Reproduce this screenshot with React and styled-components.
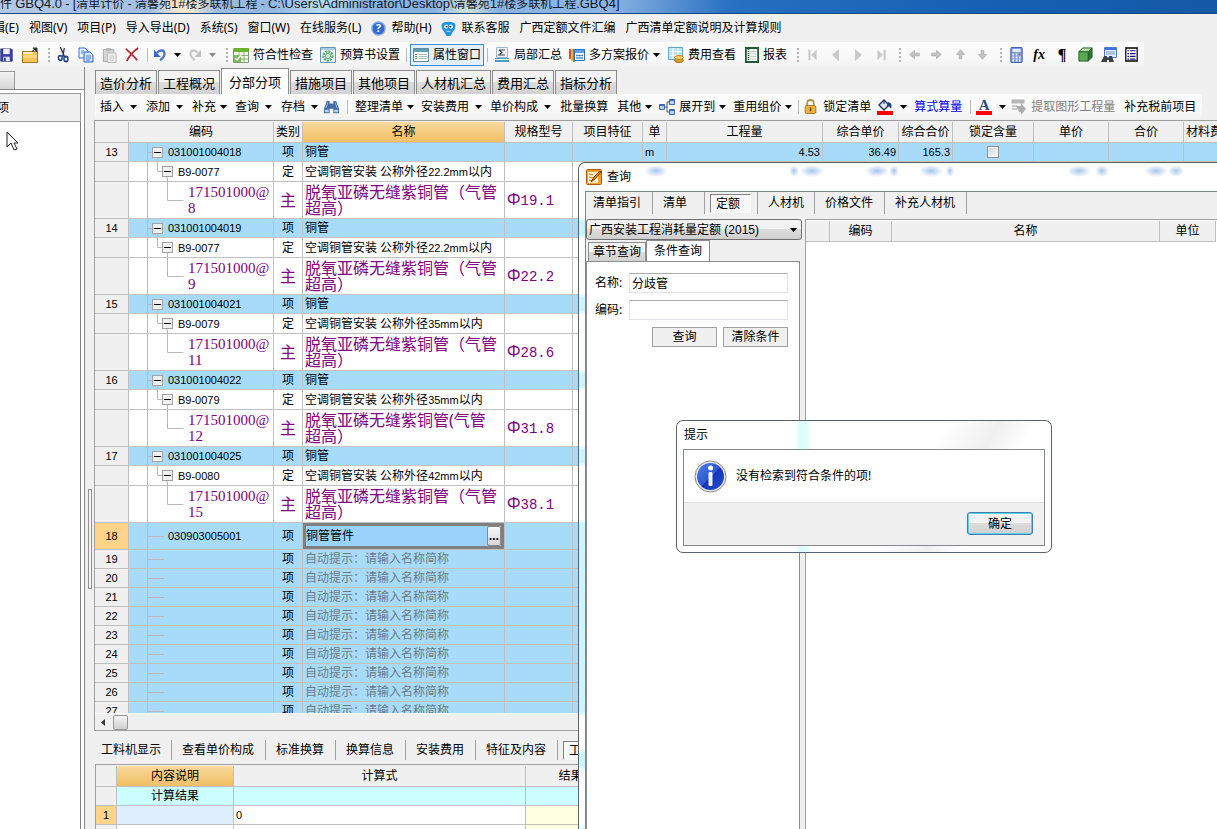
import React, { useState } from "react";
import styled, { createGlobalStyle, css } from "styled-components";

const GlobalStyle = createGlobalStyle`
  * {
    box-sizing: border-box;
  }

  body {
    margin: 0;
    background: #f0f0f0;
    color: #000;
    font: 12px/16px "Noto Sans", "Noto Sans CJK SC", sans-serif;
  }

  button,
  input,
  select {
    font: inherit;
    color: inherit;
    margin: 0;
    padding: 0;
    border: 0;
    background: none;
  }

  svg {
    display: block;
    flex: none;
  }
`;

/* Icons */

const Icon = ({ name, w = 16, h = 16 }) => (
  <svg width={w} height={h} viewBox="0 0 16 16" preserveAspectRatio="none">
    {icons[name]}
  </svg>
);

const icons = {
  save: (
    <>
      <path d="M1 1h13l1 1v13H1z" fill="#3a3fae" stroke="#25287c" />
      <path d="M4 1h8v6H4z" fill="#eef1fb" />
      <path d="M4 10h8v5H4z" fill="#dfe3f5" />
      <path d="M5 11h2v4H5z" fill="#25287c" />
    </>
  ),
  folder: (
    <>
      <path d="M.5 4.500h15v11H.5z" fill="#f0c65a" stroke="#a97a1c" />
      <path d="M1 5h10v2H1z" fill="#fdf0bd" />
      <path d="M1 8h14v3H1z" fill="#f8d87e" />
      <path d="M10 5c1-2 2-3 4-3M11 1h4v4z" stroke="#333" fill="#333" />
    </>
  ),
  cut: (
    <>
      <path d="M4 0l5 9M9 1L7 10" stroke="#30384a" strokeWidth="1.600" />
      <circle cx="4" cy="11" r="2.300" fill="none" stroke="#1f4190" strokeWidth="1.800" />
      <circle cx="11" cy="12" r="2.500" fill="none" stroke="#1f4190" strokeWidth="1.800" />
    </>
  ),
  copy: (
    <>
      <path d="M1 1h6l3 3v7H1z" fill="#e8f1ff" stroke="#3b76cf" />
      <path d="M6 5h6l3 3v7H6z" fill="#cfe2fc" stroke="#2b63ba" />
      <path d="M3 4h3M3 6h2M8 9h5M8 11h5M8 13h4" stroke="#4d86d8" />
    </>
  ),
  paste: (
    <>
      <path d="M1.500 2.500h11v12h-11z" fill="#d5d5d5" stroke="#aaa" />
      <path d="M4.500 1h5v3h-5z" fill="#b5b5b5" />
      <path d="M6 6h9v9.500H6z" fill="#efefef" stroke="#b8b8b8" />
      <path d="M8 9h5M8 11h5M8 13h5" stroke="#c5c5c5" />
    </>
  ),
  remove: <path d="M1 2c5 4 9 8 13 12M15 1C9 5 5 9 2 15" stroke="#cb1e2c" strokeWidth="2" fill="none" />,
  undo: (
    <>
      <path d="M4 6c3-4 10-4 10 1 0 4-3 6-6 8" fill="none" stroke="#4a78c8" strokeWidth="3" />
      <path d="M0 2v9h9z" fill="#3569c4" />
    </>
  ),
  redo: (
    <>
      <path d="M12 6C9 2 2 2 2 7c0 4 3 6 6 8" fill="none" stroke="#cacaca" strokeWidth="3" />
      <path d="M16 2v9H7z" fill="#c3c3c3" />
    </>
  ),
  check: (
    <>
      <path d="M.5 1.500h15v14H.5z" fill="#f5fbf0" stroke="#7f9a72" />
      <path d="M1 1h15v4H1z" fill="#6cb32c" />
      <path d="M1 8.500h14M1 12h14M6 5v10M11 5v10" stroke="#8cae7b" />
      <path d="M1 8h7v7H1z" fill="#7db958" />
      <path d="M2 11l2 2 4-5" fill="none" stroke="#fff" strokeWidth="1.300" />
    </>
  ),
  gear: (
    <>
      <path d="M.5.500h15v15H.5z" fill="#e7f3f6" stroke="#6f93ad" />
      <path d="M1 1h14v2H1z" fill="#a9cce6" />
      <circle cx="8" cy="9" r="4.500" fill="none" stroke="#63ad76" strokeWidth="2.400" strokeDasharray="2 1" />
      <circle cx="8" cy="9" r="2.600" fill="#d7eddb" stroke="#63ad76" />
    </>
  ),
  panel: (
    <>
      <path d="M.5 1.500h15v13H.5z" fill="#fff" stroke="#63879b" />
      <path d="M1 2h14v3H1z" fill="#5d9fb4" />
      <path d="M3 7v6" stroke="#5aa052" strokeWidth="2" strokeDasharray="1 1" />
      <path d="M6 7.500h8M6 9.500h8M6 11.500h8" stroke="#a7bcc2" />
    </>
  ),
  sigma: (
    <>
      <path d="M2.500.500h11v10h-11z" fill="#edf4fb" stroke="#9eb6cd" />
      <path d="M5 3h6M5 3l3 2.500L5 8h6" fill="none" stroke="#444" strokeWidth="1.200" />
      <path d="M1 11h14v1H1zM1 13h14v2H1z" fill="#4b9fbb" />
    </>
  ),
  plans: (
    <>
      <path d="M0 2h2v10H0z" fill="#e34a2d" />
      <path d="M2 2h2v12H2z" fill="#f2b52c" />
      <path d="M4 2h2v13H4z" fill="#46a648" />
      <path d="M5.500 2.500h10v11h-10z" fill="#fff" stroke="#2c71c6" />
      <path d="M6 3h9v3H6z" fill="#5ba1ec" />
      <path d="M7 8.500h7M7 11h7" stroke="#558ec9" strokeWidth="1.500" />
    </>
  ),
  fees: (
    <>
      <path d="M.5.500h14v12H.5z" fill="#bde2f6" stroke="#5da6cc" />
      <path d="M1 4.500h13M1 8.500h13M5 1v11M10 1v11" stroke="#fff" />
      <ellipse cx="11" cy="13.500" rx="4.500" ry="2" fill="#dba233" stroke="#a86f11" />
      <ellipse cx="11" cy="10.500" rx="4.500" ry="2" fill="#f7cc62" stroke="#b7821f" />
    </>
  ),
  report: (
    <>
      <path d="M1 1h14v14H1z" fill="#fff" stroke="#1b5a30" strokeWidth="2" />
      <path d="M4 2v12" stroke="#1b5a30" strokeDasharray="1 1" strokeWidth="2" />
      <path d="M6 4.500h7M6 7h7M6 9.500h7M6 12h7" stroke="#b9c8bd" />
    </>
  ),
  first: <path d="M2 2h3v12H2zM14 2v12L6 8z" fill="#c9c9c9" />,
  prev: <path d="M13 1v14L3 8z" fill="#c9c9c9" />,
  next: <path d="M3 1v14l10-7z" fill="#c9c9c9" />,
  last: <path d="M14 2h-3v12h3zM2 2v12l8-6z" fill="#c9c9c9" />,
  left: <path d="M1 8l7-6v4h7v4H8v4z" fill="#c2c2c2" stroke="#aaa" />,
  right: <path d="M15 8L8 2v4H1v4h7v4z" fill="#c2c2c2" stroke="#aaa" />,
  up: <path d="M8 1l6 7h-4v6H6V8H2z" fill="#c2c2c2" stroke="#aaa" />,
  down: <path d="M8 15l6-7h-4V2H6v6H2z" fill="#c2c2c2" stroke="#aaa" />,
  calc: (
    <>
      <rect x="1" y=".5" width="14" height="15" rx="1" fill="#7a9bdd" stroke="#3b58a0" />
      <path d="M3 2h10v3H3z" fill="#dfeaff" />
      <path d="M3 7.500h10M3 10.500h10M3 13.500h10" stroke="#fff" strokeWidth="2" strokeDasharray="2 2" />
      <path d="M11 7.500h2" stroke="#d33" strokeWidth="2" />
    </>
  ),
  cube: (
    <>
      <path d="M1 5h10v10H1z" fill="#5aa953" stroke="#245b24" />
      <path d="M1 5l4-4h10l-4 4z" fill="#b8e0ad" stroke="#245b24" />
      <path d="M15 1v10l-4 4V5z" fill="#2f7a33" stroke="#245b24" />
    </>
  ),
  find: (
    <>
      <path d="M3.500.500h12v10h-12z" fill="#e4efff" stroke="#4c7ad1" />
      <path d="M4 1h11v2H4z" fill="#3d74dd" />
      <path d="M5 5h9M5 7h9" stroke="#7b9bd0" />
      <path d="M3 9h3v2h2V9h3l2 6H8v-2H6v2H0z" fill="#3a4148" />
    </>
  ),
  list: (
    <>
      <path d="M1 1h14v14H1z" fill="#fff" stroke="#000" strokeWidth="1.500" />
      <path d="M3 4h2M3 7h2M3 10h2M3 13h2M6 4h7M6 7h7M6 10h7M6 13h7" stroke="#14147a" strokeWidth="1.300" />
    </>
  ),
  binoculars: (
    <>
      <path d="M3 1h3v3h4V1h3l3 9v5h-6v-5H6v5H0v-5z" fill="#456ca8" />
      <path d="M1 11h4v3H1zM11 11h4v3h-4z" fill="#b9d3f3" />
      <path d="M4 3L2 9M12 3l2 6" stroke="#a8c3ea" />
    </>
  ),
  tree: (
    <>
      <path d="M5 8h3V3h3M8 8v5h3" fill="none" stroke="#555" />
      <path d="M.5 5.500h5v5h-5zM10.500.500h5v5h-5zM10.500 10.500h5v5h-5z" fill="#b9d0f2" stroke="#3a68b3" />
      <path d="M1 6h4v1H1zM11 1h4v1h-4zM11 11h4v1h-4z" fill="#3a68b3" />
    </>
  ),
  lock: (
    <>
      <path d="M4 8V4c0-4 8-4 8 0v4" fill="none" stroke="#a9924f" strokeWidth="2" />
      <rect x="1.500" y="7" width="13" height="8.500" rx="1.500" fill="#ecb43e" stroke="#9b7016" />
      <path d="M7 9h2v4H7z" fill="#6b4a0c" />
    </>
  ),
  bucket: (
    <>
      <path d="M2 6l5-5 5 5-5 5z" fill="#dfe5ee" stroke="#1d2b57" strokeWidth="1.300" />
      <path d="M7 1V5" stroke="#1d2b57" />
      <path d="M11 3c4 1 4 4 3 7-1-2-2-3-4-3z" fill="#1d3d86" />
      <path d="M0 12h16v4H0z" fill="#f00" />
    </>
  ),
  extract: (
    <>
      <path d="M.5.500h13v4H.5z" fill="#b5b5b5" />
      <path d="M1 6h5v2H1zM1 9h5v2H1z" fill="#c9c9c9" />
      <path d="M5 7h5V4l5 6-5 6v-3H8z" fill="#adadad" />
    </>
  ),
  help: (
    <>
      <circle cx="8" cy="8" r="7" fill="#2d6ed0" stroke="#8aa9da" strokeWidth="1.500" />
      <text x="8" y="12" fontSize="11" fontWeight="700" fill="#fff" textAnchor="middle">?</text>
    </>
  ),
  mascot: (
    <>
      <path d="M1 3c2-3 12-3 14 0 1 3 0 6-2 8l-3 5H6l-3-5C1 9 0 6 1 3z" fill="#1e92dc" />
      <circle cx="5.500" cy="6" r="2.200" fill="#fff" />
      <circle cx="10.500" cy="6" r="2.200" fill="#fff" />
      <circle cx="6" cy="6" r="1" fill="#123" />
      <circle cx="10" cy="6" r="1" fill="#123" />
      <path d="M6 10.500c1 1 3 1 4 0" fill="none" stroke="#fff" />
    </>
  ),
  query: (
    <>
      <rect x=".5" y=".5" width="15" height="15" rx="1" fill="#f0a22c" stroke="#b3570a" />
      <path d="M2 3h10v11H2z" fill="#fff3cf" />
      <path d="M3 5l4 1M3 8l4 1M3 11l3 1" stroke="#c7771c" />
      <path d="M5 13l3-5 6-6 1 1-6 7z" fill="#e78a15" stroke="#7c3a08" />
    </>
  ),
};

const Caret = () => (
  <svg width="7" height="4" viewBox="0 0 7 4">
    <path d="M0 0h7L3.500 4z" fill="currentColor" />
  </svg>
);

/* Shared pieces */

const Latin = styled.span`
  font-family: "Liberation Sans", sans-serif;
  font-size: ${(p) => p.$size || 11}px;
`;

// latin characters get their own size between the full width ones
const Mixed = ({ size, children }) =>
  children
    .split(/([\x21-\x7e]+)/)
    .map((part, i) => (i % 2 ? <Latin key={i} $size={size}>{part}</Latin> : part));

const Page = styled.div`
  position: relative;
  display: flex;
  flex-direction: column;
  height: 100vh;
  overflow: hidden;
`;

const TitleBar = styled.header`
  flex: none;
  height: 14px;
  overflow: hidden;
  white-space: nowrap;
  line-height: 7px;
  color: #101828;
  border-bottom: 1px solid #17467f;
  background: radial-gradient(circle at 184px 6px, #f3e6cf 8px, transparent 34px),
    radial-gradient(circle at 320px 4px, #b6d8f1 8px, transparent 44px),
    radial-gradient(circle at 466px 12px, #c5ded6 4px, transparent 32px),
    linear-gradient(90deg, #b3c8e6, #8ab2e0 30%, #8cb4e4 50%, #2870c0 60%, #1661b4 80%, #1459a6);
`;

const MenuBar = styled.nav`
  display: flex;
  align-items: center;
  gap: 10px;
  flex: none;
  height: 28px;
  overflow: hidden;
`;

const MenuItem = styled.button`
  display: flex;
  align-items: center;
  gap: 5px;
  flex: none;
  white-space: nowrap;

  &:first-child {
    margin-left: -7px;
  }
`;

const ToolRow = styled.div`
  display: flex;
  flex: none;
  height: ${(p) => p.$height}px;
  padding-left: ${(p) => p.$pad || 0}px;
`;

const ToolGroup = styled.div`
  display: flex;
  align-items: center;
  flex: none;
  padding-right: ${(p) => p.$end || 0}px;
  background: linear-gradient(#fcfcfc, #f9f9f9 60%, #f1f1f1);
`;

const Tool = styled.button`
  display: flex;
  align-items: center;
  flex: none;
  gap: ${(p) => p.$inner || 4}px;
  margin-left: ${(p) => p.$gap || 0}px;
  height: 22px;
  white-space: nowrap;
  color: ${(p) => p.$color || "#000"};
  ${(p) =>
    p.$pressed &&
    css`
      padding: 0 2px;
      border: 1px solid #3d8ad6;
      background: #e2f0fb;
    `}
`;

const Separator = styled.span`
  flex: none;
  width: 1px;
  height: 14px;
  margin-left: ${(p) => p.$gap}px;
  background: #bbb;
`;

const Handle = styled.span`
  flex: none;
  width: 2px;
  height: 14px;
  margin-left: ${(p) => p.$gap}px;
  background: repeating-linear-gradient(#b4b4b4 0 2px, transparent 2px 4px);
`;

const Glyph = styled.span`
  width: 12px;
  font: ${(p) => p.$font};
  text-align: center;
`;

const FontColor = styled.span`
  width: 16px;
  border-bottom: 4px solid #f00;
  font: bold 15px/12px "Liberation Serif", serif;
  color: #2d4d86;
  text-align: center;
`;

/* Left side */

const Body = styled.div`
  display: flex;
  flex: 1;
  min-height: 0;
`;

const Side = styled.aside`
  position: relative;
  display: flex;
  flex-direction: column;
  flex: none;
  width: 85px;
  padding-top: 4px;
  border-right: 1px solid #8a8a8a;
`;

const SideTab = styled.div`
  width: 15px;
  height: 18px;
  border: 1px solid #9a9a9a;
  border-width: 1px 1px 0 0;
  background: linear-gradient(#f2f2f2, #d5d5d5);
`;

const SideFrame = styled.div`
  flex: 1;
  display: flex;
  flex-direction: column;
  padding: 3px 3px 0 0;
  border-top: 1px solid #8a8a8a;
  background: #fff;
`;

const SideHead = styled.div`
  height: 29px;
  padding-top: 6px;
  border: 1px solid #9a9a9a;
  border-width: 1px 1px 1px 0;
  background: #f0f0f0;
  text-indent: -3px;
`;

const SideTree = styled.div`
  flex: 1;
  border-right: 1px solid #808080;
`;

const Pointer = styled.svg`
  position: absolute;
  left: 6px;
  top: 64px;
`;

const Splitter = styled.div`
  display: flex;
  align-items: center;
  flex: none;
  width: 9px;
  padding: 182px 0 0 3px;
`;

const Grip = styled.span`
  width: 4px;
  height: 100px;
  border: 1px solid #909090;
  background: #f6f6f6;
`;

/* Main side */

const Main = styled.main`
  display: flex;
  flex-direction: column;
  flex: 1;
  min-width: 0;
`;

const tabFace = css`
  border: 1px solid #8c8c8c;
  border-bottom: 0;
  background: ${(p) => (p.$active ? "#fff" : "linear-gradient(#f3f3f3 50%, #dcdcdc 50%, #d2d2d2)")};
  white-space: nowrap;
`;

const Tabs = styled.div`
  display: flex;
  align-items: flex-end;
  flex: none;
  gap: 1px;
  height: 27px;
  padding: 0 1px;
`;

const Tab = styled.button`
  flex: none;
  height: ${(p) => (p.$active ? 26 : 24)}px;
  padding: 0 ${(p) => (p.$active ? 7 : 4)}px;
  font-size: 13px;
  ${tabFace}
`;

const Frame = styled.section`
  display: flex;
  flex-direction: column;
  flex: 1;
  min-height: 0;
  margin-top: 1px;
  border: 1px solid #a0a0a0;
  border-right: 0;
  overflow: hidden;
`;

const Scroll = styled.div`
  flex: 1;
  min-height: 0;
  padding-top: 1px;
  overflow: hidden;
`;

const Grid = styled.table`
  table-layout: fixed;
  width: 100%;
  min-width: ${(p) => p.$min || 0}px;
  border-collapse: separate;
  border-spacing: 0;

  th,
  td {
    padding: 0 2px;
    border: 1px solid #c0c0c0;
    border-width: 0 1px 1px 0;
    font-weight: 400;
    line-height: 16px;
    white-space: nowrap;
    overflow: hidden;
  }
`;

const HeadRow = styled.tr`
  height: 21px;
  background: #f0f0f0;
`;

const HeadCell = styled.th`
  text-align: center;
  ${(p) => p.$hot && "background: linear-gradient(#f9d99d, #f1be63);"}
`;

const rowColors = { item: "#a8dbfa", norm: "#fff", part: "#fff" };

const Row = styled.tr`
  height: ${(p) => p.$height}px;
  background: ${(p) => rowColors[p.$kind]};
  ${(p) =>
    p.$kind === "part" &&
    css`
      color: #800080;
      font-size: 16px;
    `}
`;

const NumCell = styled.td`
  background: ${(p) => (p.$hot ? "#ffd488" : "#f0f0f0")};
  color: #000;
  font-size: 12px;
  text-align: center;
`;

const Cell = styled.td`
  text-align: ${(p) => p.$align || "left"};
  color: ${(p) => p.$color || "inherit"};
`;

const FlushCell = styled.td`
  && {
    padding: 0;
  }
`;

const Code = styled.div`
  display: flex;
  align-items: center;
  height: ${(p) => p.$height}px;
`;

const PartCode = styled.span`
  font: 15px/16px "Liberation Serif", serif;
`;

const Spec = styled.span`
  font-family: "Liberation Mono", "Noto Sans CJK SC", monospace;
  font-size: 14px;
`;

const Editor = styled.div`
  display: flex;
  align-items: center;
  height: 26px;
  border: 3px solid #808080;
  background: #99d2fa;

  input {
    flex: 1;
    min-width: 0;
  }

  button {
    width: 14px;
    height: 20px;
    border: 1px solid #888;
    border-radius: 2px;
    background: linear-gradient(#fafafa, #d5d5d5);
    font-weight: 700;
    line-height: 10px;
  }
`;

const Check = styled.input`
  appearance: none;
  display: block;
  width: 12px;
  height: 12px;
  margin: 0 auto;
  border: 1px solid #8e8f8f;
  background: linear-gradient(135deg, #cfcfcf, #fff);
  box-shadow: inset 0 0 0 1px #f4f4f4;
`;

const ScrollBar = styled.div`
  display: flex;
  align-items: center;
  gap: 7px;
  flex: none;
  height: 17px;
  padding-left: 5px;
  border-top: 1px solid #fff;
  background: #f0f0f0;

  span {
    width: 15px;
    height: 15px;
    border: 1px solid #979797;
    border-radius: 2px;
    background: linear-gradient(#f5f5f5, #cfcfcf);
  }
`;

const Details = styled.section`
  flex: none;
  height: 98px;
  padding-top: 9px;
  overflow: hidden;
`;

const FlatTabs = styled.div`
  display: flex;
  height: ${(p) => p.$height}px;
`;

const FlatTab = styled.button`
  flex: none;
  width: ${(p) => p.$width}px;
  padding-left: ${(p) => p.$pad}px;
  border-right: 1px solid #a0a0a0;
  text-align: left;
  white-space: nowrap;
`;

const Pressed = styled.span`
  display: block;
  margin: 0 6px 0 5px;
  padding-left: 5px;
  height: 19px;
  border: 1px solid #808080;
  border-color: #808080 #fff #fff #808080;
  background: #f8f8f8;
  line-height: 18px;
`;

const DetailFrame = styled.div`
  margin: 4px 0 0 1px;
  padding-top: 1px;
  border: 1px solid #a0a0a0;
  border-right: 0;
`;

const DetailRow = styled.tr`
  height: 19px;
  background: ${(p) => p.$color || "#fff"};
`;

const DetailCell = styled.td`
  background: ${(p) => p.$color};
`;

/* Query window */

// soft shapes of the grid that show through the glass title: [x, half width]
const smudges = [[77, 12], [215, 5], [233, 12], [298, 12], [315, 5], [352, 12], [371, 4], [500, 12], [523, 7], [577, 12], [597, 8]];

const smudgeLayers = smudges
  .map(([x, w]) => `radial-gradient(${w}px 6px at ${x}px 8px, #a9c6ec, transparent)`)
  .join(",");

const QueryWindow = styled.section`
  position: absolute;
  inset: 162px 0 0 578px;
  display: flex;
  flex-direction: column;
  padding-left: 6px;
  border: 1px solid #59646e;
  border-width: 1px 0 0 1px;
  border-radius: 7px 0 0 0;
  background: ${smudgeLayers},
    linear-gradient(transparent 356px, #c9f5fc 362px 548px, transparent 554px),
    repeating-linear-gradient(#fff 0 54px, #c9f5fc 59px 71px, #fff 76px);
`;

const QueryTitle = styled.h2`
  display: flex;
  align-items: center;
  gap: 5px;
  flex: none;
  height: 28px;
  margin: 0;
  padding-left: 1px;
  font-size: 12px;
  font-weight: 400;
`;

const QueryBody = styled.div`
  display: flex;
  flex-direction: column;
  flex: 1;
  min-height: 0;
  border: 1px solid #7f8488;
  border-width: 1px 0 0 1px;
  background: #f0f0f0;
`;

const QueryColumns = styled.div`
  display: flex;
  flex: 1;
  min-height: 0;
  padding-top: 5px;
  gap: 3px;
`;

const Search = styled.div`
  display: flex;
  flex-direction: column;
  flex: none;
  width: 216px;
`;

const Norms = styled.select`
  height: 21px;
  padding: 0 2px;
  border: 1px solid #707070;
  border-radius: 3px;
  background: linear-gradient(#f2f2f2 50%, #ddd 50%, #cfcfcf);
  font-family: "Liberation Sans", "Noto Sans CJK SC", sans-serif;
  appearance: none;
`;

const SelectBox = styled.div`
  display: grid;
  align-items: center;

  & > * {
    grid-area: 1 / 1;
  }

  svg {
    justify-self: end;
    margin-right: 5px;
    pointer-events: none;
  }
`;

const SearchTabs = styled.div`
  display: flex;
  align-items: flex-end;
  height: 21px;
  padding-left: 2px;
`;

const SearchTab = styled.button`
  height: ${(p) => (p.$active ? 21 : 19)}px;
  padding: 0 ${(p) => (p.$active ? 7 : 4)}px;
  ${tabFace}
`;

const SearchForm = styled.form`
  display: flex;
  flex-direction: column;
  flex: 1;
  gap: 7px;
  margin-right: 2px;
  padding: 11px 11px 0 8px;
  border: 1px solid #8c8c8c;
  border-bottom: 0;
  background: #fff;
`;

const Field = styled.label`
  display: flex;
  align-items: center;
  justify-content: space-between;

  input {
    width: 159px;
    height: 20px;
    padding: 0 2px;
    border: 1px solid #e2e3ea;
    border-top-color: #abadb3;
  }
`;

const Buttons = styled.div`
  display: flex;
  justify-content: flex-end;
  gap: 6px;

  button {
    width: 65px;
    height: 20px;
    border: 1px solid #a0a0a0;
    background: #f0f0f0;
  }
`;

const Results = styled.div`
  flex: 1;
  min-width: 0;
  padding-top: 1px;
  border: 1px solid #a0a0a0;
  border-width: 1px 0 0 1px;
  background: #fff;
  overflow: hidden;
`;

/* Message box */

const Message = styled.div`
  position: absolute;
  left: 676px;
  top: 420px;
  width: 376px;
  padding: 0 6px 6px;
  border: 1px solid #59646e;
  border-radius: 7px;
  background: linear-gradient(90deg, transparent 118px, #dffcfd 122px 130px, transparent 134px),
    linear-gradient(120deg, #fff 60%, #f0f0f0 72%, #fff 80%);
`;

const MessageTitle = styled.h3`
  height: 28px;
  margin: 0;
  padding-left: 1px;
  font-size: 12px;
  font-weight: 400;
  line-height: 27px;
`;

const MessageBody = styled.div`
  border: 1px solid #85898d;
  background: #fff;
`;

const MessageText = styled.p`
  display: flex;
  align-items: center;
  gap: 9px;
  height: 52px;
  margin: 0;
  padding-left: 10px;
`;

const MessageActions = styled.div`
  display: flex;
  justify-content: flex-end;
  height: 43px;
  padding: 9px 11px;
  border-top: 1px solid #dfdfdf;
  background: #f0f0f0;

  button {
    width: 66px;
    height: 23px;
    border: 1px solid #3c7fb1;
    border-radius: 3px;
    background: linear-gradient(#f2f2f2 50%, #ddd 50%, #cfcfcf);
    box-shadow: inset 0 0 0 1px #5fd0f0;
  }
`;

const InfoIcon = () => (
  <svg width="33" height="33" viewBox="0 0 33 33">
    <defs>
      <linearGradient id="info" x1="0" y1="0" x2="1" y2="1">
        <stop offset="0" stopColor="#4c7fe6" />
        <stop offset="0.500" stopColor="#2f58d2" />
        <stop offset="0.520" stopColor="#1634b8" />
        <stop offset="1" stopColor="#2750d0" />
      </linearGradient>
    </defs>
    <circle cx="16.500" cy="16.500" r="15.500" fill="#e9e9e9" stroke="#888" />
    <circle cx="16.500" cy="16.500" r="13.500" fill="url(#info)" />
    <circle cx="16.500" cy="8" r="2.500" fill="#fff" />
    <rect x="14.500" y="12" width="4" height="14" rx="1" fill="#f2f2f2" />
  </svg>
);

/* Data */

const title =
  "件 GBQ4.0 - [清单计价 - 清馨苑1#楼多联机工程 - C:\\Users\\Administrator\\Desktop\\清馨苑1#楼多联机工程.GBQ4]";

const menus = ["辑(E)", "视图(V)", "项目(P)", "导入导出(D)", "系统(S)", "窗口(W)", "在线服务(L)"];

const tabs = ["造价分析", "工程概况", "分部分项", "措施项目", "其他项目", "人材机汇总", "费用汇总", "指标分析"];

const columns = [
  ["", 34],
  ["编码", 145],
  ["类别", 29],
  ["名称", 202],
  ["规格型号", 68],
  ["项目特征", 70],
  ["单", 24],
  ["工程量", 156],
  ["综合单价", 76],
  ["综合合价", 54],
  ["锁定含量", 81],
  ["单价", 75],
  ["合价", 75],
  ["材料费", 0],
];

const groups = [
  { no: "13", code: "031001004018", norm: "B9-0077", size: "22.2mm", part: "8", spec: "19.1", open: "（" },
  { no: "14", code: "031001004019", norm: "B9-0077", size: "22.2mm", part: "9", spec: "22.2", open: "（" },
  { no: "15", code: "031001004021", norm: "B9-0079", size: "35mm", part: "11", spec: "28.6", open: "（" },
  { no: "16", code: "031001004022", norm: "B9-0079", size: "35mm", part: "12", spec: "31.8", open: "(" },
  { no: "17", code: "031001004025", norm: "B9-0080", size: "42mm", part: "15", spec: "38.1", open: "（" },
];

const emptyRows = ["19", "20", "21", "22", "23", "24", "25", "26", "27"];

const detailTabs = [
  ["查看单价构成", 94],
  ["标准换算", 70],
  ["换算信息", 70],
  ["安装费用", 70],
  ["特征及内容", 82],
];

const Box = ({ x, y }) => (
  <g>
    <rect x={x + 0.5} y={y + 0.5} width="10" height="10" fill="#f0f0f0" stroke="#a3a3a3" />
    <path d={`M${x + 2} ${y + 5.5}h7`} stroke="#000" />
  </g>
);

// connector lines and the fold box in front of each code
const TreeLines = ({ kind, height }) => {
  const mid = Math.floor(height / 2) + 0.5;
  return (
    <svg width={{ item: 39, norm: 49, part: 59 }[kind] || 39} height={height}>
      <g stroke="#b9b9b9" fill="none">
        <path d={`M18.500 0V${height}`} />
        {kind === "item" && <path d={`M19 ${mid}h5M28.500 ${mid}V${height}`} />}
        {kind === "norm" && <path d={`M28.500 0V${mid}h6M38.500 ${mid}V${height}`} />}
        {kind === "part" && <path d={`M38.500 0V${mid}h16`} />}
        {kind === "leaf" && <path d={`M19 ${mid}h16`} />}
      </g>
      {kind === "item" && <Box x={23} y={mid - 5.5} />}
      {kind === "norm" && <Box x={33} y={mid - 5.5} />}
    </svg>
  );
};

const CodeCell = ({ kind, height, children }) => (
  <FlushCell>
    <Code $height={height}>
      <TreeLines kind={kind} height={height} />
      {children}
    </Code>
  </FlushCell>
);

const Blank = ({ count }) => Array.from({ length: count }, (_, i) => <Cell key={i} />);

const Group = ({ item, first }) => (
  <>
    <Row $kind="item" $height={19}>
      <NumCell><Mixed>{item.no}</Mixed></NumCell>
      <CodeCell kind="item" height={18}><Latin>{item.code}</Latin></CodeCell>
      <Cell $align="center">项</Cell>
      <Cell>铜管</Cell>
      <Blank count={2} />
      <Cell>{first && <Latin>m</Latin>}</Cell>
      <Cell $align="right">{first && <Latin>4.53</Latin>}</Cell>
      <Cell $align="right">{first && <Latin>36.49</Latin>}</Cell>
      <Cell $align="right">{first && <Latin>165.3</Latin>}</Cell>
      <Cell>{first && <Check type="checkbox" aria-label="锁定含量" />}</Cell>
      <Blank count={3} />
    </Row>
    <Row $kind="norm" $height={20}>
      <NumCell />
      <CodeCell kind="norm" height={19}><Latin>{item.norm}</Latin></CodeCell>
      <Cell $align="center">定</Cell>
      <Cell><Mixed>{`空调铜管安装 公称外径${item.size}以内`}</Mixed></Cell>
      <Blank count={10} />
    </Row>
    <Row $kind="part" $height={37}>
      <NumCell />
      <CodeCell kind="part" height={36}>
        <PartCode>171501000@<br />{item.part}</PartCode>
      </CodeCell>
      <Cell $align="center">主</Cell>
      <Cell>{`脱氧亚磷无缝紫铜管${item.open}气管`}<br />超高）</Cell>
      <Cell>Φ<Spec>{item.spec}</Spec></Cell>
      <Blank count={9} />
    </Row>
  </>
);

const BillGrid = () => {
  const [name, setName] = useState("铜管管件");
  return (
    <Grid $min={1129}>
      <colgroup>
        {columns.map(([label, width]) => (
          <col key={label} style={width ? { width } : undefined} />
        ))}
      </colgroup>
      <thead>
        <HeadRow>
          {columns.map(([label]) => (
            <HeadCell key={label} $hot={label === "名称"}>{label}</HeadCell>
          ))}
        </HeadRow>
      </thead>
      <tbody>
        {groups.map((item, i) => (
          <Group key={item.no} item={item} first={i === 0} />
        ))}
        <Row $kind="item" $height={27}>
          <NumCell $hot><Mixed>18</Mixed></NumCell>
          <CodeCell kind="leaf" height={26}><Latin>030903005001</Latin></CodeCell>
          <Cell $align="center">项</Cell>
          <FlushCell>
            <Editor>
              <input aria-label="名称" value={name} onChange={(e) => setName(e.target.value)} />
              <button type="button">…</button>
            </Editor>
          </FlushCell>
          <Blank count={10} />
        </Row>
        {emptyRows.map((no) => (
          <Row key={no} $kind="item" $height={19}>
            <NumCell><Mixed>{no}</Mixed></NumCell>
            <CodeCell kind="leaf" height={18} />
            <Cell $align="center">项</Cell>
            <Cell $color="#6d7b85">自动提示：请输入名称简称</Cell>
            <Blank count={10} />
          </Row>
        ))}
      </tbody>
    </Grid>
  );
};

const MainToolbar = () => (
  <ToolRow $height={25}>
    <ToolGroup $end={5}>
      <Tool aria-label="保存"><Icon name="save" w={13} h={14} /></Tool>
      <Tool $gap={9} aria-label="打开"><Icon name="folder" /></Tool>
    </ToolGroup>
    <ToolGroup $end={4}>
      <Handle $gap={5} />
      <Tool $gap={7} aria-label="剪切"><Icon name="cut" w={13} /></Tool>
      <Tool $gap={8} aria-label="复制"><Icon name="copy" /></Tool>
      <Tool $gap={8} aria-label="粘贴"><Icon name="paste" w={15} /></Tool>
      <Tool $gap={8} aria-label="删除"><Icon name="remove" w={14} h={15} /></Tool>
      <Separator $gap={8} />
      <Tool $gap={6} $inner={8} aria-label="撤销"><Icon name="undo" w={12} h={13} /><Caret /></Tool>
      <Tool $gap={8} $inner={8} $color="#8a8a8a" aria-label="重做"><Icon name="redo" w={12} h={13} /><Caret /></Tool>
    </ToolGroup>
    <ToolGroup $end={6}>
      <Handle $gap={6} />
      <Tool $gap={5}><Icon name="check" />符合性检查</Tool>
      <Tool $gap={7}><Icon name="gear" />预算书设置</Tool>
      <Separator $gap={6} />
      <Tool $gap={3} $pressed><Icon name="panel" />属性窗口</Tool>
      <Separator $gap={3} />
      <Tool $gap={6}><Icon name="sigma" />局部汇总</Tool>
      <Tool $gap={7}><Icon name="plans" /><span>多方案报价</span><Caret /></Tool>
      <Tool $gap={8}><Icon name="fees" />费用查看</Tool>
      <Tool $gap={9}><Icon name="report" w={14} />报表</Tool>
    </ToolGroup>
    <ToolGroup $end={6}>
      <Handle $gap={4} />
      <Tool $gap={8} aria-label="首行"><Icon name="first" w={11} h={14} /></Tool>
      <Tool $gap={12} aria-label="上一行"><Icon name="prev" w={11} h={14} /></Tool>
      <Tool $gap={12} aria-label="下一行"><Icon name="next" w={11} h={14} /></Tool>
      <Tool $gap={12} aria-label="末行"><Icon name="last" w={11} h={14} /></Tool>
    </ToolGroup>
    <ToolGroup $end={6}>
      <Handle $gap={6} />
      <Tool $gap={8} aria-label="左移"><Icon name="left" w={11} h={11} /></Tool>
      <Tool $gap={11} aria-label="右移"><Icon name="right" w={11} h={11} /></Tool>
      <Tool $gap={13} aria-label="上移"><Icon name="up" w={11} h={11} /></Tool>
      <Tool $gap={11} aria-label="下移"><Icon name="down" w={11} h={11} /></Tool>
    </ToolGroup>
    <ToolGroup $end={6}>
      <Handle $gap={6} />
      <Tool $gap={8} aria-label="计算器"><Icon name="calc" w={13} /></Tool>
      <Tool $gap={10}><Glyph $font='italic bold 14px/16px "Liberation Serif", serif'>fx</Glyph></Tool>
      <Tool $gap={11}><Glyph $font='bold 16px/16px "Liberation Serif", serif'>¶</Glyph></Tool>
      <Tool $gap={10} aria-label="三维"><Icon name="cube" w={15} h={15} /></Tool>
      <Tool $gap={8} aria-label="查找"><Icon name="find" /></Tool>
      <Tool $gap={8} aria-label="列表"><Icon name="list" w={13} h={15} /></Tool>
    </ToolGroup>
  </ToolRow>
);

const BillToolbar = () => (
  <ToolRow $height={25} $pad={1}>
    <ToolGroup $end={6}>
      <Tool $gap={5} $inner={6}>插入<Caret /></Tool>
      <Tool $gap={9} $inner={6}>添加<Caret /></Tool>
      <Tool $gap={9}>补充<Caret /></Tool>
      <Tool $gap={8} $inner={6}>查询<Caret /></Tool>
      <Tool $gap={9} $inner={6}>存档<Caret /></Tool>
      <Tool $gap={6} aria-label="查找"><Icon name="binoculars" w={15} h={14} /></Tool>
      <Separator $gap={8} />
      <Tool $gap={7}>整理清单<Caret /></Tool>
      <Tool $gap={7} $inner={6}>安装费用<Caret /></Tool>
      <Tool $gap={8} $inner={6}>单价构成<Caret /></Tool>
      <Tool $gap={9}>批量换算</Tool>
      <Tool $gap={9}>其他<Caret /></Tool>
      <Tool $gap={7}><Icon name="tree" />展开到<Caret /></Tool>
      <Tool $gap={7}>重用组价<Caret /></Tool>
      <Separator $gap={6} />
      <Tool $gap={5} $inner={6}><Icon name="lock" w={13} h={15} />锁定清单</Tool>
      <Tool $gap={6} $inner={7} aria-label="填充颜色"><Icon name="bucket" /><Caret /></Tool>
      <Tool $gap={7} $color="#0000e0">算式算量</Tool>
      <Separator $gap={8} />
      <Tool $gap={5} $inner={7}><FontColor>A</FontColor><Caret /></Tool>
      <Tool $gap={5} $color="#808080"><Icon name="extract" />提取图形工程量</Tool>
      <Tool $gap={9}>补充税前项目</Tool>
    </ToolGroup>
  </ToolRow>
);

const DetailPane = () => (
  <Details>
    <FlatTabs $height={20}>
      <FlatTab $width={78} $pad={7}>工料机显示</FlatTab>
      {detailTabs.map(([label, width]) => (
        <FlatTab key={label} $width={width} $pad={10}>{label}</FlatTab>
      ))}
      <FlatTab $width={94} $pad={0}><Pressed>工程量明细</Pressed></FlatTab>
    </FlatTabs>
    <DetailFrame>
      <Grid>
        <colgroup>
          <col style={{ width: 21 }} />
          <col style={{ width: 117 }} />
          <col style={{ width: 292 }} />
          <col style={{ width: 90 }} />
          <col />
        </colgroup>
        <thead>
          <HeadRow>
            <HeadCell />
            <HeadCell $hot>内容说明</HeadCell>
            <HeadCell>计算式</HeadCell>
            <HeadCell>结果</HeadCell>
            <HeadCell />
          </HeadRow>
        </thead>
        <tbody>
          <DetailRow $color="#ccffff">
            <NumCell />
            <Cell $align="center">计算结果</Cell>
            <Blank count={3} />
          </DetailRow>
          <DetailRow>
            <NumCell $hot><Mixed>1</Mixed></NumCell>
            <DetailCell $color="#deeeff" />
            <Cell><Latin>0</Latin></Cell>
            <DetailCell $color="#ffffe1" />
            <Cell />
          </DetailRow>
          <DetailRow>
            <NumCell />
            <Cell />
            <Cell />
            <DetailCell $color="#ffffe1" />
            <Cell />
          </DetailRow>
        </tbody>
      </Grid>
    </DetailFrame>
  </Details>
);

const QueryDialog = () => {
  const [name, setName] = useState("分歧管");
  const [code, setCode] = useState("");
  return (
    <QueryWindow>
      <QueryTitle><Icon name="query" />查询</QueryTitle>
      <QueryBody>
        <FlatTabs $height={22}>
          <FlatTab $width={67} $pad={7}>清单指引</FlatTab>
          <FlatTab $width={52} $pad={10}>清单</FlatTab>
          <FlatTab $width={53} $pad={0}><Pressed>定额</Pressed></FlatTab>
          <FlatTab $width={57} $pad={10}>人材机</FlatTab>
          <FlatTab $width={70} $pad={10}>价格文件</FlatTab>
          <FlatTab $width={82} $pad={10}>补充人材机</FlatTab>
        </FlatTabs>
        <QueryColumns>
          <Search>
            <SelectBox>
              <Norms aria-label="定额库">
                <option>广西安装工程消耗量定额 (2015)</option>
              </Norms>
              <Caret />
            </SelectBox>
            <SearchTabs>
              <SearchTab>章节查询</SearchTab>
              <SearchTab $active>条件查询</SearchTab>
            </SearchTabs>
            <SearchForm onSubmit={(e) => e.preventDefault()}>
              <Field>
                名称:
                <input value={name} onChange={(e) => setName(e.target.value)} />
              </Field>
              <Field>
                编码:
                <input value={code} onChange={(e) => setCode(e.target.value)} />
              </Field>
              <Buttons>
                <button type="submit">查询</button>
                <button type="reset">清除条件</button>
              </Buttons>
            </SearchForm>
          </Search>
          <Results>
            <Grid>
              <colgroup>
                <col style={{ width: 24 }} />
                <col style={{ width: 62 }} />
                <col />
                <col style={{ width: 56 }} />
                <col style={{ width: 1 }} />
              </colgroup>
              <thead>
                <HeadRow>
                  <HeadCell />
                  <HeadCell>编码</HeadCell>
                  <HeadCell>名称</HeadCell>
                  <HeadCell>单位</HeadCell>
                </HeadRow>
              </thead>
            </Grid>
          </Results>
        </QueryColumns>
      </QueryBody>
    </QueryWindow>
  );
};

const App = () => (
  <Page>
    <GlobalStyle />
    <TitleBar><Mixed size={13}>{title}</Mixed></TitleBar>
    <MenuBar>
      {menus.map((label) => (
        <MenuItem key={label}>{label}</MenuItem>
      ))}
      <MenuItem><Icon name="help" w={15} h={15} />帮助(H)</MenuItem>
      <MenuItem><Icon name="mascot" w={15} h={15} />联系客服</MenuItem>
      <MenuItem>广西定额文件汇编</MenuItem>
      <MenuItem>广西清单定额说明及计算规则</MenuItem>
    </MenuBar>
    <MainToolbar />
    <Body>
      <Side>
        <SideTab />
        <SideFrame>
          <SideHead>项</SideHead>
          <SideTree />
        </SideFrame>
        <Pointer width="13" height="20" viewBox="0 0 13 20">
          <path d="M1 1v15l4-4 3 7 3-1-3-6h4z" fill="#fff" stroke="#222" />
        </Pointer>
      </Side>
      <Splitter><Grip /></Splitter>
      <Main>
        <Tabs>
          {tabs.map((label) => (
            <Tab key={label} $active={label === "分部分项"}>{label}</Tab>
          ))}
        </Tabs>
        <BillToolbar />
        <Frame>
          <Scroll><BillGrid /></Scroll>
          <ScrollBar>
            <svg width="6" height="7" viewBox="0 0 6 7"><path d="M5 0v7L1 3.500z" fill="#333" /></svg>
            <span />
          </ScrollBar>
        </Frame>
        <DetailPane />
      </Main>
    </Body>
    <QueryDialog />
    <Message role="alertdialog" aria-label="提示">
      <MessageTitle>提示</MessageTitle>
      <MessageBody>
        <MessageText><InfoIcon />没有检索到符合条件的项!</MessageText>
        <MessageActions><button type="button">确定</button></MessageActions>
      </MessageBody>
    </Message>
  </Page>
);

export default App;
